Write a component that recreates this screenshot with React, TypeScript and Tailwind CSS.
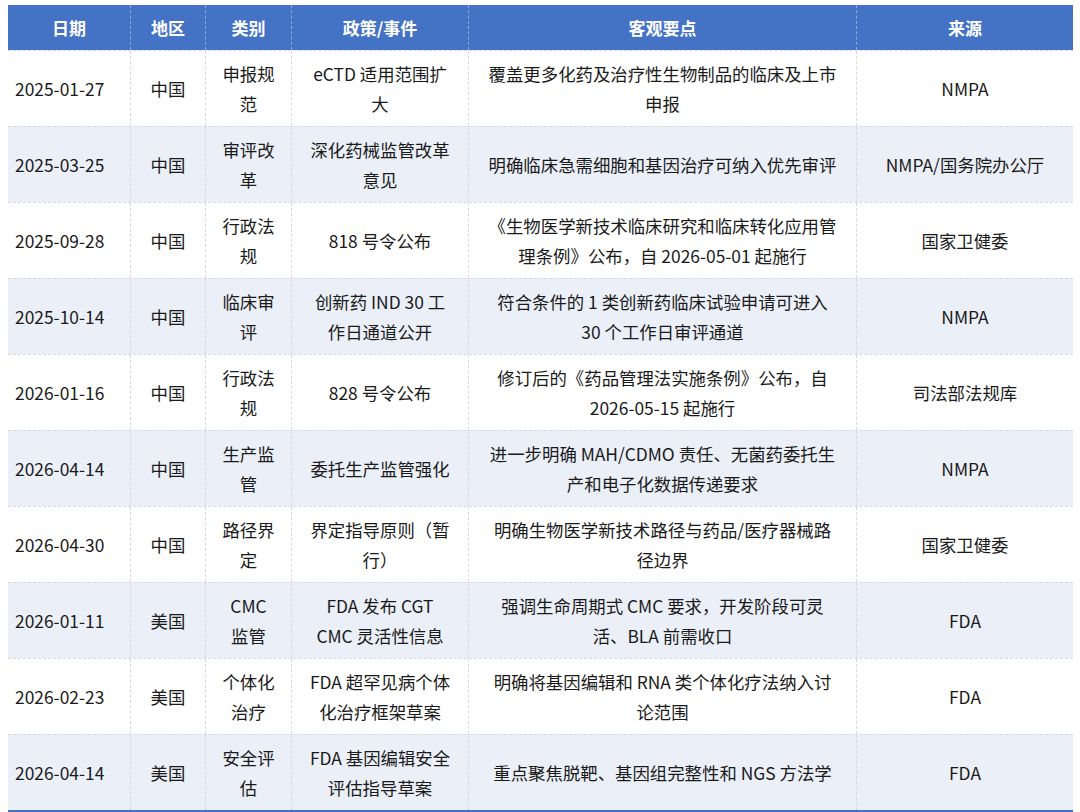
const rows = [
  ['2025-01-27', '中国', '申报规范', 'eCTD 适用范围扩大', '覆盖更多化药及治疗性生物制品的临床及上市申报', 'NMPA'],
  ['2025-03-25', '中国', '审评改革', '深化药械监管改革意见', '明确临床急需细胞和基因治疗可纳入优先审评', 'NMPA/国务院办公厅'],
  ['2025-09-28', '中国', '行政法规', '818 号令公布', '《生物医学新技术临床研究和临床转化应用管理条例》公布，自 2026-05-01 起施行', '国家卫健委'],
  ['2025-10-14', '中国', '临床审评', '创新药 IND 30 工作日通道公开', '符合条件的 1 类创新药临床试验申请可进入 30 个工作日审评通道', 'NMPA'],
  ['2026-01-16', '中国', '行政法规', '828 号令公布', '修订后的《药品管理法实施条例》公布，自 2026-05-15 起施行', '司法部法规库'],
  ['2026-04-14', '中国', '生产监管', '委托生产监管强化', '进一步明确 MAH/CDMO 责任、无菌药委托生产和电子化数据传递要求', 'NMPA'],
  ['2026-04-30', '中国', '路径界定', '界定指导原则（暂行）', '明确生物医学新技术路径与药品/医疗器械路径边界', '国家卫健委'],
  ['2026-01-11', '美国', 'CMC 监管', 'FDA 发布 CGT CMC 灵活性信息', '强调生命周期式 CMC 要求，开发阶段可灵活、BLA 前需收口', 'FDA'],
  ['2026-02-23', '美国', '个体化治疗', 'FDA 超罕见病个体化治疗框架草案', '明确将基因编辑和 RNA 类个体化疗法纳入讨论范围', 'FDA'],
  ['2026-04-14', '美国', '安全评估', 'FDA 基因编辑安全评估指导草案', '重点聚焦脱靶、基因组完整性和 NGS 方法学', 'FDA'],
]

const headers = ['日期', '地区', '类别', '政策/事件', '客观要点', '来源']
const widths = ['w-[123px]', 'w-[75px]', 'w-[86px]', 'w-[177px]', 'w-[388px]', 'w-[216px]']
const pads = ['px-[7px]', 'px-[10px]', 'px-[16px]', 'px-[17px]', 'px-[18px]', 'px-[6px]']

export default function App() {
  return (
    <div
      className="w-[1080px] h-[812px] bg-white pt-[5px] pl-[8px]"
      style={{ fontFamily: '"Noto Sans CJK SC", "Noto Sans", sans-serif' }}
    >
      <div className="w-[1065px] border-b-2 border-[#4472c4]">
        <div className="flex h-[45px] bg-[#4472c4] text-white font-bold text-[17px]">
          {headers.map((h, i) => (
            <div
              key={h}
              className={`${widths[i]} flex items-center justify-center border-r border-dashed border-[#8fa8da] last:border-r-0`}
            >
              {h}
            </div>
          ))}
        </div>
        {rows.map((r, ri) => (
          <div
            key={ri}
            className={`flex h-[76px] text-[17.4px] leading-[30px] text-[#1a1a1a] border-t border-dashed border-[#d6d9df] ${
              ri % 2 === 1 ? 'bg-[#eaeff8]' : 'bg-white'
            }`}
          >
            {r.map((c, ci) => (
              <div
                key={ci}
                className={`${widths[ci]} ${pads[ci]} flex items-center ${
                  ci === 0 ? 'justify-start' : 'justify-center text-center'
                } border-r border-dashed border-[#d6d9df] last:border-r-0`}
              >
                {c}
              </div>
            ))}
          </div>
        ))}
      </div>
    </div>
  )
}
